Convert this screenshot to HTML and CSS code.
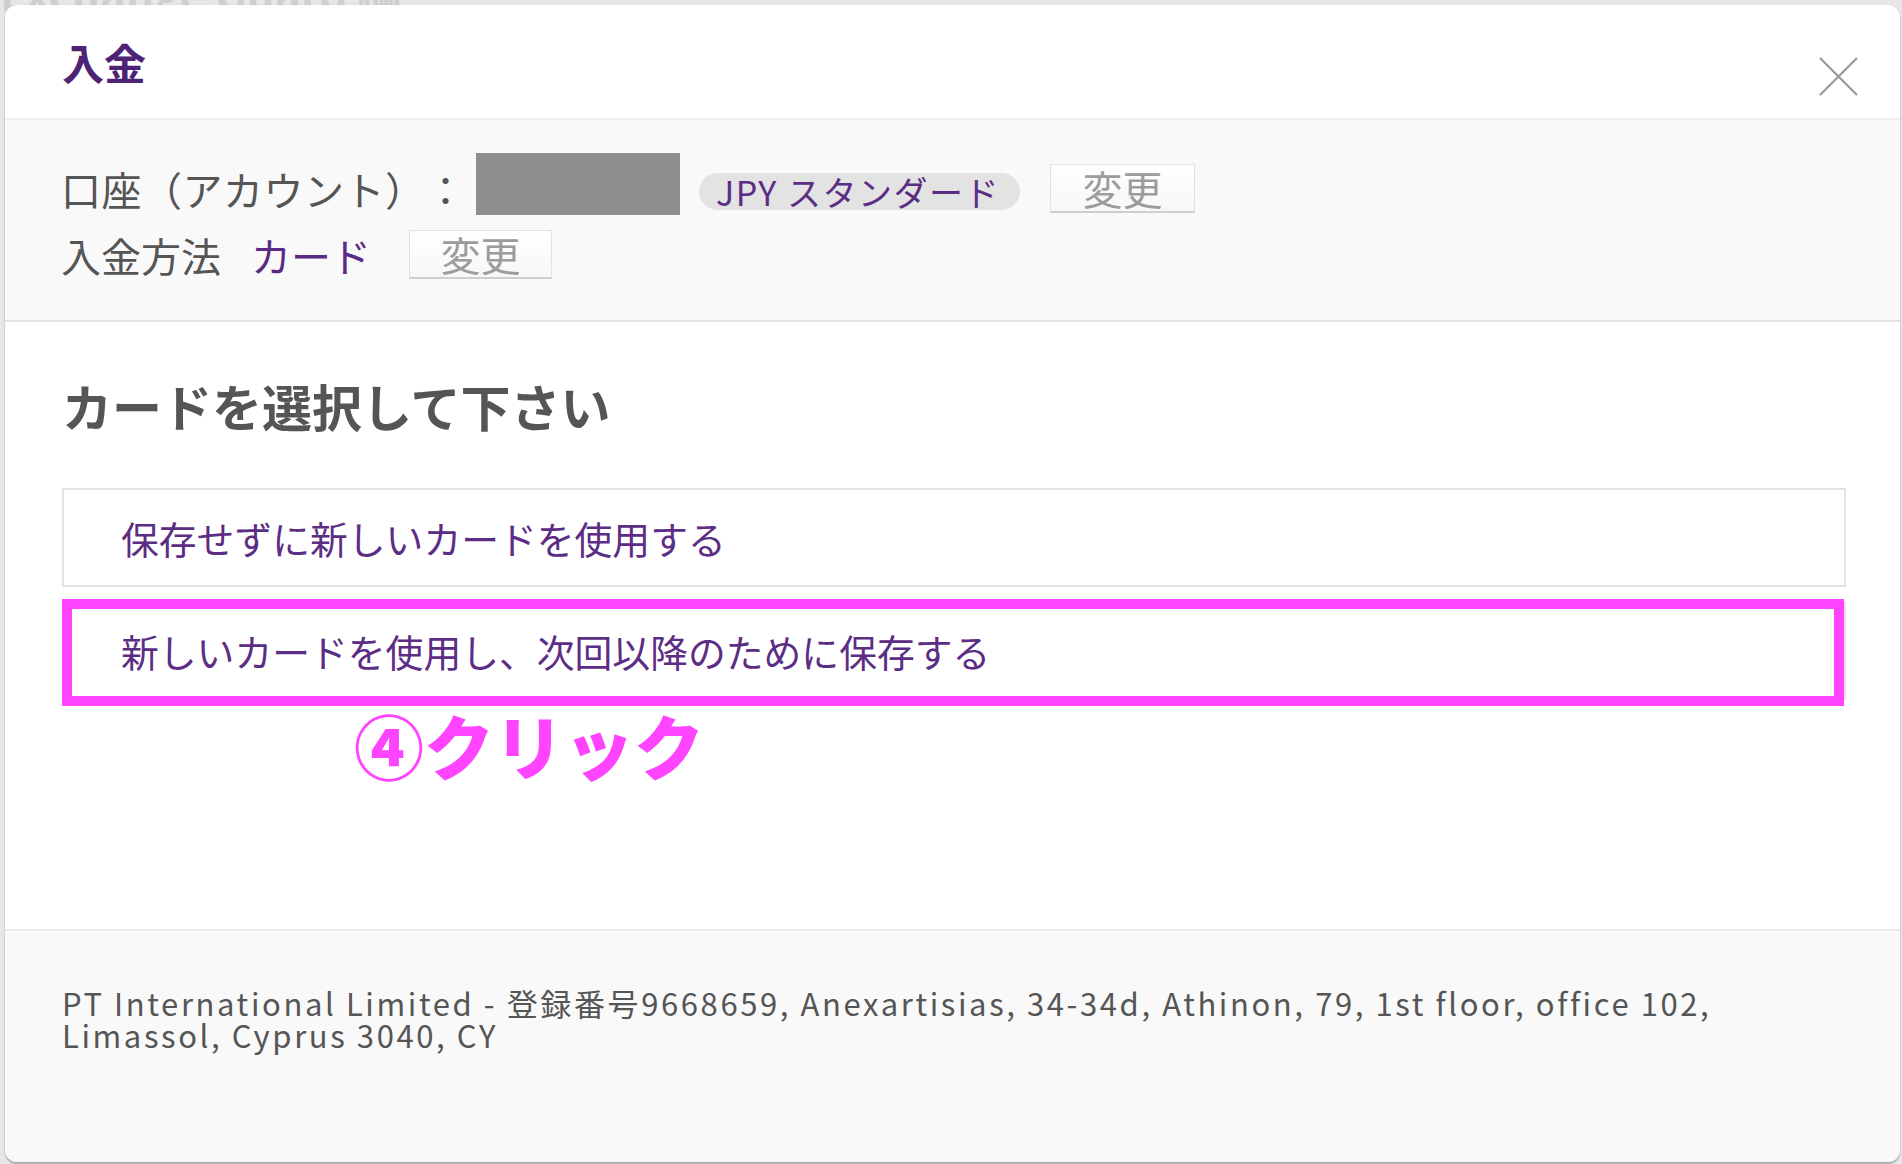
FILE: index.html
```html
<!DOCTYPE html>
<html lang="ja">
<head>
<meta charset="utf-8">
<title>入金</title>
<link rel="stylesheet" href="styles.css">
</head>
<body>
<div class="backdrop-text">Exchange Guard 欄</div>
<div class="page">
  <div class="modal">
    <div class="modal-header">
      <h1 class="modal-title">入金</h1>
      <button class="close-btn" aria-label="閉じる">
        <svg width="39" height="39" viewBox="0 0 39 39"><path d="M1 1 L38 38 M38 1 L1 38" stroke="#9a9a9a" stroke-width="2.2" fill="none"/></svg>
      </button>
    </div>
    <div class="info">
      <div class="info-row row-account">
        <span class="label label-account">口座（アカウント）：</span>
        <span class="masked"></span>
        <span class="badge">JPY スタンダード</span>
        <button class="change-btn btn-account">変更</button>
      </div>
      <div class="info-row row-method">
        <span class="label">入金方法</span>
        <span class="value">カード</span>
        <button class="change-btn btn-method">変更</button>
      </div>
    </div>
    <div class="content">
      <h2 class="section-title">カードを選択して下さい</h2>
      <div class="option">保存せずに新しいカードを使用する</div>
      <div class="option option-highlight">新しいカードを使用し、次回以降のために保存する<span class="highlight-frame"></span></div>
      <div class="annotation">④クリック</div>
    </div>
    <div class="footer">
      <p class="address">PT International Limited - 登録番号9668659, Anexartisias, 34-34d, Athinon, 79, 1st floor, office 102,<br>Limassol, Cyprus 3040, CY</p>
    </div>
  </div>
</div>
</body>
</html>
```
FILE: styles.css
```css
* { box-sizing: border-box; }
html, body { margin: 0; padding: 0; }
body {
  background: #e7e7e7;
  font-family: "Noto Sans CJK JP", "Noto Sans", sans-serif;
  text-spacing-trim: space-all;
  width: 1902px;
  height: 1164px;
  overflow: hidden;
  position: relative;
}
.backdrop-text {
  position: absolute;
  top: -40px;
  left: 0;
  font-size: 44px;
  color: #cfcfcf;
  font-weight: 700;
  white-space: nowrap;
}
.page {
  position: relative;
  padding: 5px 2px 2px 5px;
  height: 1164px;
}
.modal {
  background: #fff;
  border-radius: 12px;
  height: 1157px;
  display: flex;
  flex-direction: column;
  overflow: hidden;
  box-shadow: 0 2px 2px rgba(0,0,0,0.28), 0 0 2px rgba(0,0,0,0.08);
}
.modal-header {
  height: 115px;
  flex: 0 0 auto;
  display: flex;
  align-items: center;
  justify-content: space-between;
  padding: 0 42px 0 57px;
  border-bottom: 2px solid #eeeeee;
}
.modal-title {
  margin: 0;
  font-size: 42px;
  line-height: 1;
  font-weight: 700;
  color: #4e2275;
}
.close-btn {
  border: 0;
  background: none;
  padding: 0;
  width: 39px;
  height: 39px;
  margin-top: 30px;
  display: block;
}
.close-btn svg { display: block; }
.info {
  flex: 0 0 auto;
  height: 202px;
  background: #f9f9f9;
  border-bottom: 2px solid #e2e2e2;
  padding: 33px 54px 0 56px;
}
.info-row {
  display: flex;
  align-items: center;
}
.row-account { height: 62px; }
.row-method { height: 49px; margin-top: 15px; }
.label {
  font-size: 40px;
  line-height: 1;
  color: #555;
  white-space: nowrap;
}
.label-account { margin-top: 10px; letter-spacing: 0.5px; }
.masked {
  width: 204px;
  height: 62px;
  background: #8f8f8f;
  margin-left: 10px;
  flex: 0 0 auto;
}
.badge {
  margin-left: 19px;
  margin-top: 14px;
  height: 37px;
  border-radius: 19px;
  background: #e3e3e3;
  padding: 0 20px 0 17px;
  font-size: 34px;
  letter-spacing: 1.5px;
  line-height: 37px;
  color: #5c2d84;
  white-space: nowrap;
}
.change-btn {
  font-family: inherit;
  width: 145px;
  height: 49px;
  padding: 0;
  border: 1px solid #e2e2e2;
  border-bottom: 2px solid #cfcfcf;
  background: linear-gradient(#ffffff, #f7f7f7);
  color: #9c9c9c;
  font-size: 40px;
  line-height: 1;
  flex: 0 0 auto;
}
.btn-account { margin-left: 30px; margin-top: 8px; }
.value {
  margin-left: 30px;
  font-size: 40px;
  line-height: 1;
  color: #5b2a85;
}
.btn-method { margin-left: 38px; width: 143px; }
.content {
  flex: 1 1 auto;
  padding: 54px 54px 0 57px;
}
.section-title {
  margin: 0;
  font-size: 50px;
  line-height: 58px;
  font-weight: 700;
  color: #555;
}
.option {
  position: relative;
  margin-top: 54px;
  height: 99px;
  border: 2px solid #e3e3e3;
  padding-left: 57px;
  display: flex;
  align-items: center;
  font-size: 37.8px;
  color: #5c2d84;
  white-space: nowrap;
}
.option-highlight { margin-top: 14px; }
.highlight-frame {
  position: absolute;
  top: -4px;
  left: -2px;
  right: 0;
  bottom: -8px;
  border: 10px solid #ff44ff;
}
.annotation {
  margin-top: 10px;
  padding-left: 292px;
  font-size: 70px;
  line-height: 1;
  font-weight: 900;
  color: #ff44ff;
}
.footer {
  flex: 0 0 233px;
  background: #f9f9f9;
  border-top: 2px solid #ececec;
  padding: 56px 54px 0 57px;
}
.address {
  margin: 0;
  font-size: 31px;
  line-height: 32px;
  letter-spacing: 2.6px;
  color: #555;
  white-space: nowrap;
}
```
